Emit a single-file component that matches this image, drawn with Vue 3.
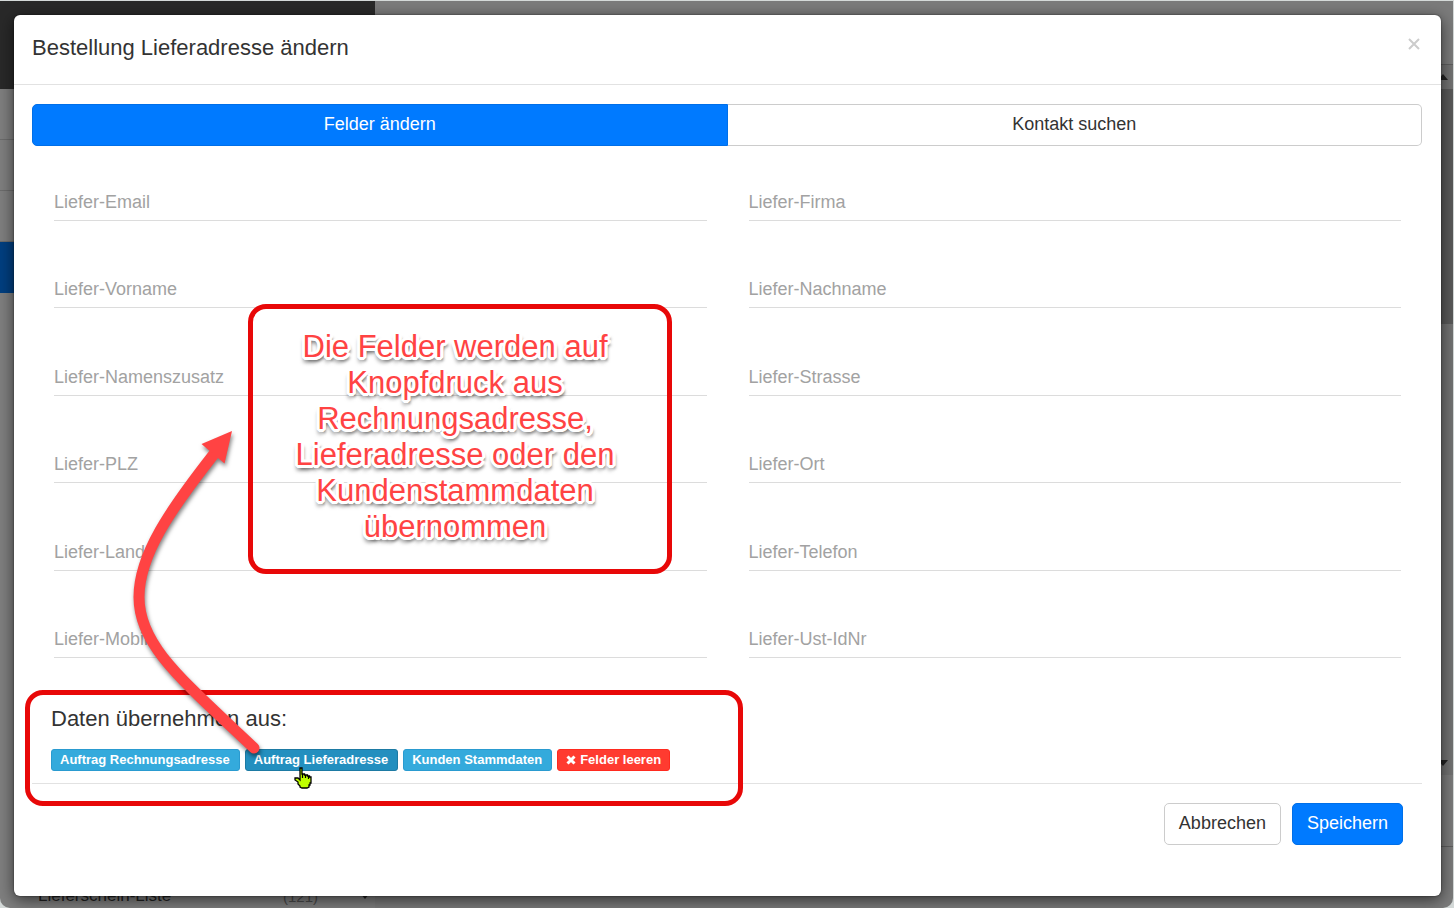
<script setup>
import { ref } from 'vue'

const fields = ref([
  'Liefer-Email', 'Liefer-Firma',
  'Liefer-Vorname', 'Liefer-Nachname',
  'Liefer-Namenszusatz', 'Liefer-Strasse',
  'Liefer-PLZ', 'Liefer-Ort',
  'Liefer-Land', 'Liefer-Telefon',
  'Liefer-Mobil', 'Liefer-Ust-IdNr',
].map((label) => ({ label, value: '' })))

const tab = ref('felder')

function clearFields() {
  fields.value.forEach((f) => { f.value = '' })
}
</script>

<template>
  <div class="page">
    <aside class="sidebar">
      <div class="brand"></div>
      <div class="nav-row"></div>
      <div class="nav-row"></div>
      <div class="nav-row"></div>
      <div class="nav-row active"></div>
      <div class="nav-last">
        <span class="nav-name">Lieferschein-Liste</span>
        <span class="nav-count">(121)</span>
        <svg class="nav-caret" width="10" height="6" viewBox="0 0 10 6"><path d="M0 0h10L5 6z" /></svg>
      </div>
    </aside>
    <main class="content">
      <div class="toolbar"></div>
      <div class="scrollbar">
        <svg width="10" height="6" viewBox="0 0 10 6"><path d="M0 6h10L5 0z" /></svg>
        <div class="thumb"></div>
        <svg width="10" height="6" viewBox="0 0 10 6"><path d="M0 0h10L5 6z" /></svg>
      </div>
      <div class="bottom"></div>
    </main>

    <div class="overlay">
      <section class="modal" role="dialog" aria-labelledby="modal-title">
        <header class="modal-header">
          <h1 id="modal-title">Bestellung Lieferadresse ändern</h1>
          <button class="close" type="button" aria-label="Schließen">
            <svg width="14" height="14" viewBox="0 0 14 14"><path d="M2 2l10 10M12 2L2 12" /></svg>
          </button>
        </header>

        <div class="modal-body">
          <div class="tabs">
            <button type="button" class="tab" :class="{ on: tab === 'felder' }" @click="tab = 'felder'">Felder ändern</button>
            <button type="button" class="tab" :class="{ on: tab === 'kontakt' }" @click="tab = 'kontakt'">Kontakt suchen</button>
          </div>

          <form class="fields" @submit.prevent>
            <input
              v-for="f in fields"
              :key="f.label"
              v-model="f.value"
              class="field"
              type="text"
              :placeholder="f.label"
              :aria-label="f.label"
            />
          </form>

          <div class="source">
            <h2>Daten übernehmen aus:</h2>
            <div class="badges">
              <button type="button" class="badge">Auftrag Rechnungsadresse</button>
              <button type="button" class="badge hover">Auftrag Lieferadresse</button>
              <button type="button" class="badge">Kunden Stammdaten</button>
              <button type="button" class="badge danger" @click="clearFields">
                <svg width="10" height="10" viewBox="0 0 10 10"><path d="M1.500 1.500l7 7M8.500 1.500l-7 7" /></svg>
                Felder leeren
              </button>
            </div>
            <div class="marker"></div>
          </div>

          <footer class="modal-footer">
            <button type="button" class="btn">Abbrechen</button>
            <button type="button" class="btn primary">Speichern</button>
          </footer>
        </div>

        <div class="callout">
          <p>Die Felder werden auf<br />Knopfdruck aus<br />Rechnungsadresse,<br />Lieferadresse oder den<br />Kundenstammdaten<br />übernommen</p>
        </div>

        <svg class="arrow" width="150" height="350" viewBox="120 420 150 350">
          <path class="shaft" d="M254 748C180 678 139 645 139 597C139 555 170 510 214 454" />
          <path class="head" d="M232 431L201.500 444L224.500 463.500Z" />
        </svg>

        <svg class="cursor" width="18" height="22" viewBox="0 0 18 22">
          <path
            d="M6 1h2v6h2.500v1h3v1h2v1H17v6h-1v2h-1v2l-2 1H8l-2-1v-1L4 17v-2l-3-2v-2h3l2 2z"
            fill="#bfff00" stroke="#000" stroke-width="1.300"
          />
          <path d="M8.500 7v4M11.500 8v3M14.500 9v3" stroke="#000" stroke-width="1.200" />
        </svg>
      </section>
    </div>
  </div>
</template>

<style>
body {
  margin: 0;
  background: #d5dad9;
}
</style>

<style scoped>
.page {
  position: relative;
  box-sizing: border-box;
  height: 100vh;
  padding: 1px 1px 0 0;
  display: flex;
  overflow: hidden;
  font-family: "Liberation Sans", Arial, sans-serif;
  color: #333;
}

button,
input {
  font-family: inherit;
}

.sidebar {
  width: 375px;
  display: flex;
  flex-direction: column;
  background: #7f7f7f;
  border-radius: 0 0 0 10px;
}

.brand {
  height: 88px;
  background: #292929;
}

.nav-row {
  box-sizing: border-box;
  height: 51px;
  border-bottom: 1px solid #6c6c6c;
}

.nav-row.active {
  background: #003f80;
  border-bottom: 0;
}

.nav-last {
  margin-top: auto;
  height: 24px;
  padding: 0 5px 0 38px;
  display: flex;
  align-items: center;
  font-size: 17px;
  color: #222;
}

.nav-count {
  margin-left: auto;
  margin-right: 42px;
  font-size: 15px;
  color: #4a4a4a;
}

.nav-caret {
  fill: #222;
}

.content {
  flex: 1;
  display: flex;
  flex-direction: column;
  align-items: flex-end;
  background: #7b7b7b;
  border-radius: 0 0 10px 0;
}

.toolbar {
  height: 63px;
  width: 100%;
  border-bottom: 1px solid #5e5e5e;
}

.scrollbar {
  width: 20px;
  flex: 1;
  display: flex;
  flex-direction: column;
  align-items: center;
  justify-content: space-between;
  padding: 9px 0;
  background: #727272;
  fill: #222;
}

.scrollbar .thumb {
  width: 100%;
  height: 235px;
  margin: 9px 0 auto;
  background: #595959;
}

.bottom {
  width: 100%;
  height: 71px;
  margin-bottom: 61px;
  border-bottom: 1px solid #5e5e5e;
}

.overlay {
  position: absolute;
  inset: 0;
  padding: 15px 13px 12px 14px;
  display: flex;
}

.modal {
  position: relative;
  flex: 1;
  background: #fff;
  border-radius: 6px;
  box-shadow: 0 4px 16px rgba(0, 0, 0, 0.6), 0 0 2px rgba(0, 0, 0, 0.6);
}

.modal-header {
  height: 69px;
  padding: 0 20px 0 18px;
  display: flex;
  align-items: center;
  justify-content: space-between;
  border-bottom: 1px solid #e2e2e2;
}

h1,
h2 {
  margin: 0;
  font-size: 22px;
  font-weight: 400;
  line-height: 28px;
}

h1 {
  padding-bottom: 3px;
}

.close {
  padding: 0;
  margin-bottom: 12px;
  border: 0;
  background: none;
  line-height: 0;
}

.close svg {
  fill: none;
  stroke: #ccc;
  stroke-width: 2;
}

.modal-body {
  padding: 19px 19px 0 18px;
}

.tabs {
  display: flex;
}

.tab {
  flex: 1;
  height: 42px;
  padding: 0 16px 2px;
  border: 1px solid #ccc;
  border-radius: 0 5px 5px 0;
  background: #fff;
  color: #333;
  font-size: 18px;
}

.tab:first-child {
  border-radius: 5px 0 0 5px;
}

.tab.on {
  background: #007aff;
  border-color: #006fe8;
  color: #fff;
}

.tab:not(.on):last-child {
  border-left: 0;
}

.fields {
  height: 473px;
  margin: 39px 21px 0 22px;
  display: grid;
  grid-template-columns: 1fr 1fr;
  column-gap: 42px;
  align-content: space-between;
}

.field {
  box-sizing: border-box;
  width: 100%;
  height: 36px;
  padding: 0;
  border: 0;
  border-bottom: 1px solid #dcdcdc;
  border-radius: 0;
  background: none;
  font-size: 18px;
  color: #333;
}

.field::placeholder {
  color: #a2a2a2;
  opacity: 1;
}

.source {
  position: relative;
  padding: 47px 19px 12px;
  border-bottom: 1px solid #e2e2e2;
}

.badges {
  display: flex;
  gap: 5px;
  margin-top: 16px;
}

.badge {
  height: 22px;
  padding: 0 9px 1px 8px;
  display: flex;
  align-items: center;
  gap: 4px;
  border: 1px solid #2a9bd0;
  border-radius: 3px;
  background: #34aadc;
  color: #fff;
  font-size: 13px;
  font-weight: 700;
  white-space: nowrap;
}

.badge.hover {
  background: #238fbf;
  border-color: #1d7aa3;
}

.badge.danger {
  padding-right: 8px;
  background: #ff3b30;
  border-color: #ff2a1f;
}

.badge svg {
  stroke: #fff;
  stroke-width: 3;
}

.marker {
  position: absolute;
  left: -7px;
  top: 32px;
  bottom: -23px;
  box-sizing: border-box;
  width: 718px;
  border: 5px solid #e80808;
  border-radius: 18px;
  pointer-events: none;
}

.modal-footer {
  padding: 19px 19px 51px;
  display: flex;
  justify-content: flex-end;
  gap: 11px;
}

.btn {
  height: 42px;
  padding: 0 14px 2px;
  border: 1px solid #ccc;
  border-radius: 5px;
  background: #fff;
  color: #333;
  font-size: 18px;
}

.btn.primary {
  background: #007aff;
  border-color: #006fe8;
  color: #fff;
}

/* Annotations drawn over the dialog */
.callout {
  position: absolute;
  left: 234px;
  top: 289px;
  box-sizing: border-box;
  width: 424px;
  height: 270px;
  padding: 20px 10px 0 0;
  border: 5px solid #e80808;
  border-radius: 18px;
  pointer-events: none;
}

.callout p {
  margin: 0;
  text-align: center;
  font-size: 31px;
  line-height: 36px;
  color: #ff4343;
  text-shadow:
    3px 0 #fff, -3px 0 #fff, 0 3px #fff, 0 -3px #fff,
    2px 2px #fff, -2px 2px #fff, 2px -2px #fff, -2px -2px #fff,
    3px 1px #fff, -3px 1px #fff, 1px 3px #fff, -1px 3px #fff,
    3px 4px 3px rgba(0, 0, 0, 0.5),
    -1px 5px 4px rgba(0, 0, 0, 0.6);
}

.arrow {
  position: absolute;
  left: 106px;
  top: 405px;
  pointer-events: none;
  filter: drop-shadow(1px 3px 2px rgba(0, 0, 0, 0.5));
}

.shaft {
  fill: none;
  stroke: #ff4343;
  stroke-width: 11;
  stroke-linecap: round;
}

.head {
  fill: #ff4343;
}

.cursor {
  position: absolute;
  left: 280px;
  top: 752px;
  pointer-events: none;
}
</style>
